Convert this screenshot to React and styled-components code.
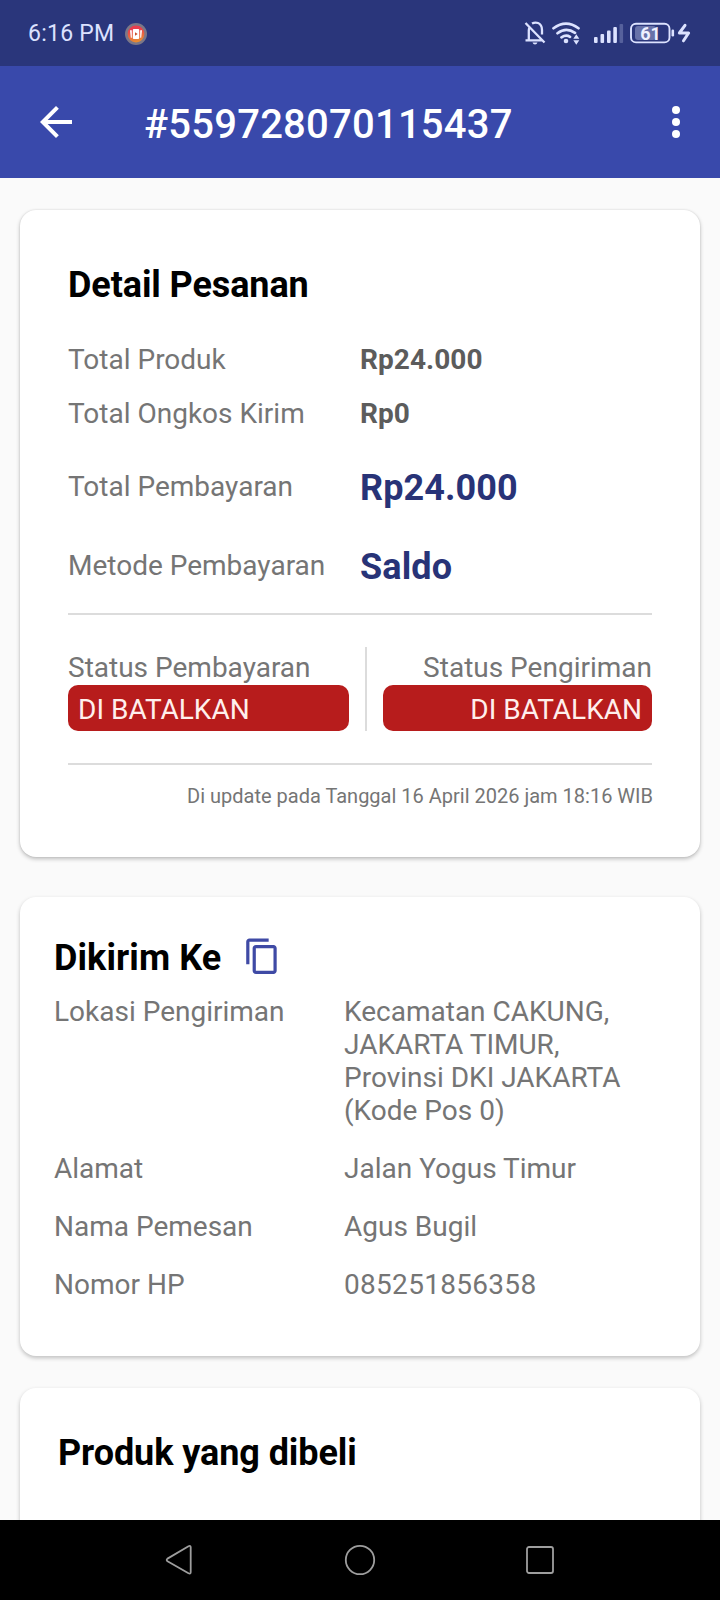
import React from "react";
import styled, { createGlobalStyle } from "styled-components";

const GlobalStyle = createGlobalStyle`
  * { box-sizing: border-box; }
  body { margin: 0; background: #fafafa; font-family: Roboto, sans-serif; }
  svg { display: block; flex: none; }
`;

const Screen = styled.div`
  width: 720px;
  height: 1600px;
  display: flex;
  flex-direction: column;
  overflow: hidden;
  background: #fafafa;
`;

const StatusBar = styled.header`
  flex: none;
  height: 66px;
  display: flex;
  align-items: center;
  padding: 0 29px 0 28px;
  background: #2a367b;
  color: #dce2ff;
`;

const Clock = styled.span`
  font-size: 23px;
  line-height: 28px;
  letter-spacing: 0.25px;
  padding-top: 2px;
  margin-right: 11px;
`;

const StatusIcons = styled.div`
  margin-left: auto;
`;

const AppBar = styled.div`
  flex: none;
  height: 112px;
  display: flex;
  align-items: center;
  padding: 0 20px 0 32px;
  background: #3949ab;
  color: #fff;
`;

const BarTitle = styled.h1`
  flex: 1;
  margin: 0 0 0 64px;
  padding-top: 5px;
  font-size: 40px;
  line-height: 48px;
  font-weight: 500;
  letter-spacing: 0.22px;
`;

const Content = styled.main`
  flex: 1;
  min-height: 0;
  overflow: hidden;
  padding: 32px 20px 0;
`;

const Card = styled.section`
  height: ${(p) => p.$height}px;
  padding: ${(p) => p.$padding};
  margin-bottom: ${(p) => p.$gap || 0}px;
  border-radius: 16px;
  background: #fff;
  box-shadow: 0 2px 4px rgba(0, 0, 0, 0.24)${(p) => (p.$rim ? ", 0 0 2px rgba(0, 0, 0, 0.12)" : "")};
`;

const Heading = styled.h2`
  margin: 0;
  font-size: 36px;
  line-height: 42px;
  font-weight: 700;
  letter-spacing: ${(p) => p.$spacing || 0}px;
  color: #000;
`;

const HeadingRow = styled.div`
  display: flex;
  gap: 22px;
  margin-bottom: 16px;
`;

const Row = styled.div`
  display: grid;
  grid-template-columns: ${(p) => p.$label}px 1fr;
  align-items: ${(p) => p.$align || "center"};
  margin-top: ${(p) => p.$top}px;
`;

const Label = styled.span`
  font-size: 28px;
  line-height: 33px;
  letter-spacing: ${(p) => p.$spacing || 0}px;
  padding-bottom: ${(p) => p.$lift || 0}px;
  color: #757575;
  white-space: pre-line;
`;

const Amount = styled.span`
  font-size: ${(p) => (p.$large ? 36 : 28)}px;
  line-height: ${(p) => (p.$large ? 42 : 33)}px;
  font-weight: 700;
  letter-spacing: ${(p) => (p.$large ? 0.1 : 0.05)}px;
  color: ${(p) => (p.$large ? "#283377" : "#5c5c5c")};
`;

const Divider = styled.div`
  height: 2px;
  margin-top: ${(p) => p.$top}px;
  background: #dcdcdc;
`;

const StatusPair = styled.div`
  display: flex;
  height: 84px;
  margin-top: 32px;
`;

const StatusColumn = styled.div`
  width: ${(p) => p.$width}px;
  display: flex;
  flex-direction: column;
  justify-content: flex-end;
  gap: 1px;
  text-align: ${(p) => p.$align};
`;

const StatusBadge = styled.div`
  height: 46px;
  padding: 0 10px;
  border-radius: 10px;
  background: #b71c1c;
  color: #ffefec;
  font-size: 28px;
  line-height: 50px;
`;

const VerticalRule = styled.div`
  width: 2px;
  margin: 0 16px;
  background: #dcdcdc;
`;

const Updated = styled.p`
  margin: 19px -1px 0 0;
  font-size: 20px;
  line-height: 24px;
  text-align: right;
  color: #757575;
`;

const NavBar = styled.nav`
  flex: none;
  height: 80px;
  display: flex;
  align-items: center;
  justify-content: space-between;
  padding: 0 164px;
  background: #000;
`;

const AppBadge = () => (
  <svg width="22" height="24" viewBox="0 -2 22 24">
    <defs>
      <linearGradient id="badge" x1="0.4" y1="0" x2="0.6" y2="1">
        <stop offset="0.2" stopColor="#e83d4d" />
        <stop offset="1" stopColor="#e8912f" />
      </linearGradient>
    </defs>
    <circle cx="11" cy="11" r="11" fill="#7b7787" />
    <circle cx="11" cy="11" r="8.4" fill="url(#badge)" />
    <rect x="7.8" y="6" width="6.4" height="10" rx="1" fill="#fff" />
    <path d="M5 7.2h1.800v7.600H5.800zM17 7.200h-1.800v7.600h1z" fill="#fff" />
    <path d="M10 9.2v3.6l2.7-1.8z" fill="#c9512f" />
  </svg>
);

const SystemIcons = () => (
  <svg width="168" height="30" viewBox="523 18 168 30" fill="none" stroke="#dce2ff" strokeWidth="2.300">
    <path d="M525.500 23l19 19.500M525.500 40.400h17M528.800 40v-9.600q0-1.600.7-3M532 23.600q3-1.700 6-.6q4 1.600 4 7v4.500" />
    <path d="M532.500 42.600h5q-.6 2-2.500 2t-2.500-2z" fill="#dce2ff" stroke="none" />
    <g strokeWidth="2.700" strokeLinecap="round">
      <path d="M553.500 28.300q12.500-9.500 25 0M557.500 33.300q8.500-6.500 17.500-.5M561.500 37.300q4.500-3 8.500-.5" />
    </g>
    <g fill="#dce2ff" stroke="none">
      <circle cx="566" cy="41" r="2.300" />
      <path d="M573.300 38.700h6l-3-4.500zM573.300 40.300h6l-3 4.500z" />
      <rect x="594" y="37" width="3.600" height="6" rx="1" />
      <rect x="600.500" y="34" width="3.600" height="9" rx="1" />
      <rect x="607" y="30.500" width="3.600" height="12.500" rx="1" />
      <rect x="613.300" y="27" width="3.600" height="16" rx="1" />
      <rect x="619.500" y="24" width="3.600" height="19" rx="1" opacity="0.25" />
      <rect x="635" y="26" width="21" height="14" rx="3" opacity="0.35" />
      <rect x="671.500" y="29.500" width="2.600" height="7" rx="1.200" />
      <text x="650.500" y="39.900" textAnchor="middle" fontFamily="Roboto, sans-serif" fontSize="18" fontWeight="700" fill="#eef0ff">61</text>
    </g>
    <rect x="631" y="23.800" width="38.500" height="18.600" rx="5" strokeWidth="1.900" />
    <path d="M685 25.300l-5.600 7.700h9.200l-5.100 7.800" strokeWidth="3" strokeLinejoin="round" strokeLinecap="round" />
  </svg>
);

const BackArrow = () => (
  <svg width="48" height="48" viewBox="0 0 24 24" fill="#fff">
    <path d="M20 11H7.830l5.590-5.590L12 4l-8 8 8 8 1.410-1.410L7.830 13H20v-2z" />
  </svg>
);

const MoreIcon = () => (
  <svg width="48" height="48" viewBox="0 0 24 24" fill="#fff">
    <circle cx="12" cy="6" r="2" />
    <circle cx="12" cy="12" r="2" />
    <circle cx="12" cy="18" r="2" />
  </svg>
);

const CopyIcon = () => (
  <svg width="38.500" height="38.500" viewBox="0 0 24 24" fill="#3f4aa5">
    <path d="M16 1H4c-1.100 0-2 .9-2 2v14h2V3h12V1zm3 4H8c-1.100 0-2 .9-2 2v14c0 1.100.9 2 2 2h11c1.100 0 2-.9 2-2V7c0-1.100-.9-2-2-2zm0 16H8V7h11v14z" />
  </svg>
);

const NavIcon = ({ children }) => (
  <svg width="32" height="32" viewBox="0 0 32 32" fill="none" stroke="#9e9e9e" strokeWidth="1.800" strokeLinejoin="round">
    {children}
  </svg>
);

const totals = [
  { label: "Total Produk", value: "Rp24.000", top: 37 },
  { label: "Total Ongkos Kirim", value: "Rp0", top: 21 },
  { label: "Total Pembayaran", value: "Rp24.000", top: 37, large: true },
  { label: "Metode Pembayaran", value: "Saldo", top: 37, large: true },
];

const recipient = [
  { label: "Lokasi Pengiriman", value: "Kecamatan CAKUNG,\nJAKARTA TIMUR,\nProvinsi DKI JAKARTA\n(Kode Pos 0)", top: 0 },
  { label: "Alamat", value: "Jalan Yogus Timur", top: 25 },
  { label: "Nama Pemesan", value: "Agus Bugil", top: 25 },
  { label: "Nomor HP", value: "085251856358", top: 25, spacing: 0.3 },
];

export default function App() {
  return (
    <Screen>
      <GlobalStyle />
      <StatusBar>
        <Clock>6:16 PM</Clock>
        <AppBadge />
        <StatusIcons>
          <SystemIcons />
        </StatusIcons>
      </StatusBar>
      <AppBar>
        <BackArrow />
        <BarTitle>#559728070115437</BarTitle>
        <MoreIcon />
      </AppBar>
      <Content>
        <Card $height={647} $padding="54px 48px 0" $gap={40} $rim>
          <Heading $spacing={-0.1}>Detail Pesanan</Heading>
          {totals.map((t) => (
            <Row key={t.label} $label={292} $top={t.top}>
              <Label $lift={t.large ? 3 : 0}>{t.label}</Label>
              <Amount $large={t.large}>{t.value}</Amount>
            </Row>
          ))}
          <Divider $top={25} />
          <StatusPair>
            <StatusColumn $width={281} $align="left">
              <Label>Status Pembayaran</Label>
              <StatusBadge>DI BATALKAN</StatusBadge>
            </StatusColumn>
            <VerticalRule />
            <StatusColumn $width={269} $align="right">
              <Label>Status Pengiriman</Label>
              <StatusBadge>DI BATALKAN</StatusBadge>
            </StatusColumn>
          </StatusPair>
          <Divider $top={32} />
          <Updated>Di update pada Tanggal 16 April 2026 jam 18:16 WIB</Updated>
        </Card>
        <Card $height={459} $padding="40px 34px 0" $gap={32}>
          <HeadingRow>
            <Heading $spacing={0.1}>Dikirim Ke</Heading>
            <CopyIcon />
          </HeadingRow>
          {recipient.map((r) => (
            <Row key={r.label} $label={290} $top={r.top} $align="start">
              <Label>{r.label}</Label>
              <Label $spacing={r.spacing}>{r.value}</Label>
            </Row>
          ))}
        </Card>
        <Card $height={400} $padding="44px 38px 0">
          <Heading $spacing={-0.08}>Produk yang dibeli</Heading>
        </Card>
      </Content>
      <NavBar>
        <NavIcon>
          <path d="M3.500 14.600L24.500 2.300q2.200-1 2.200 1v25q0 2-2.200 1L3.500 17.200q-1.600-1.300 0-2.600z" />
        </NavIcon>
        <NavIcon>
          <circle cx="16" cy="16" r="14.200" />
        </NavIcon>
        <NavIcon>
          <rect x="3" y="3" width="26" height="26" rx="2" />
        </NavIcon>
      </NavBar>
    </Screen>
  );
}
